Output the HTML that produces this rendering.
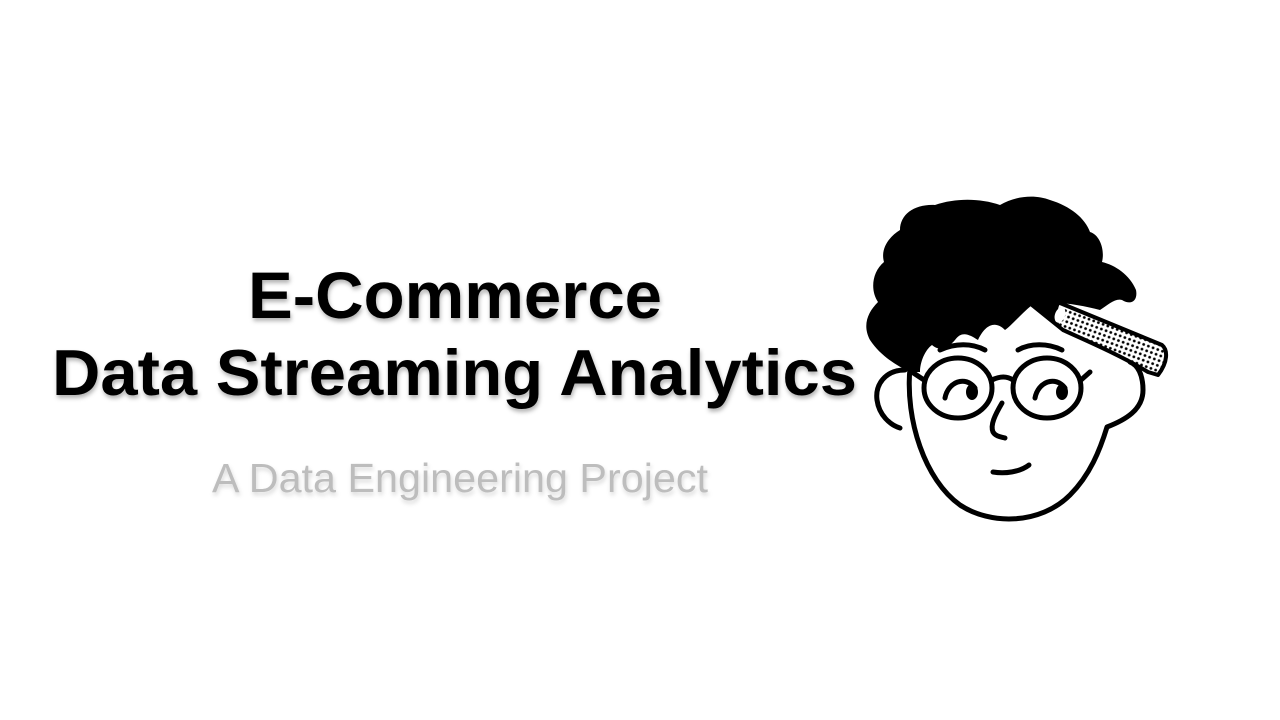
<!DOCTYPE html>
<html><head><meta charset="utf-8"><style>
html,body{margin:0;padding:0;background:#fff;width:1280px;height:720px;overflow:hidden}
svg{display:block}
</style></head><body>
<svg width="1280" height="720" viewBox="0 0 1280 720" xmlns="http://www.w3.org/2000/svg">
<defs>
<filter id="sh" x="-10%" y="-20%" width="120%" height="150%"><feDropShadow dx="1" dy="3" stdDeviation="2" flood-color="#000" flood-opacity="0.3"/></filter>
<filter id="sh2" x="-10%" y="-20%" width="120%" height="150%"><feDropShadow dx="1" dy="3" stdDeviation="2" flood-color="#000" flood-opacity="0.15"/></filter>
<pattern id="dots" width="5" height="5" patternUnits="userSpaceOnUse" patternTransform="rotate(20)"><rect width="5" height="5" fill="#fff"/><circle cx="2.5" cy="2.5" r="1.4" fill="#000"/></pattern>
</defs>
<g font-family="Liberation Sans, sans-serif" font-weight="bold" fill="#000" filter="url(#sh)">
<text x="455" y="318" font-size="66" text-anchor="middle" textLength="414" lengthAdjust="spacingAndGlyphs">E-Commerce</text>
<text x="52" y="395" font-size="65" textLength="805" lengthAdjust="spacingAndGlyphs">Data Streaming Analytics</text>
</g>
<text x="212" y="492" font-family="Liberation Sans, sans-serif" font-size="41" fill="#bdbdbd" textLength="496" lengthAdjust="spacingAndGlyphs" filter="url(#sh2)">A Data Engineering Project</text>

<g fill="none" stroke="#000" stroke-width="5" stroke-linecap="round" stroke-linejoin="round">
<path d="M910,368 C905,420 925,480 960,505 C990,525 1040,525 1070,495 C1090,475 1100,450 1107,427 C1125,420 1143,410 1143,390 C1143,375 1138,365 1130,362"/>
<path d="M905,370 C885,370 875,385 877,400 C879,415 890,425 900,428"/>
<ellipse cx="958" cy="388" rx="34" ry="30"/>
<ellipse cx="1047" cy="388" rx="34" ry="30"/>
<path d="M992,380 C1000,376 1007,376 1013,380"/>
<path d="M924,380 L912,372"/>
<path d="M1081,380 L1090,372"/>
<path d="M940,350 C955,343 972,343 985,350"/>
<path d="M1018,350 C1030,343 1048,343 1062,350"/>
<path d="M945,398 C948,382 965,375 975,388"/>
<path d="M1035,398 C1038,382 1055,375 1065,388"/>
<path d="M1002,403 C995,415 990,425 993,432 C996,437 1002,437 1005,438"/>
<path d="M993,472 C1005,474 1020,472 1029,465"/>
</g>
<ellipse cx="972" cy="392" rx="6" ry="8" fill="#000"/>
<ellipse cx="1062" cy="392" rx="6" ry="8" fill="#000"/>
<path fill="#000" d="M910,372 C895,365 880,355 870,340 C862,325 868,312 878,302 C870,290 872,272 884,262 C880,248 890,236 900,230 C900,214 915,204 935,205 C955,198 980,198 1000,205 C1015,196 1035,194 1050,200 C1070,206 1085,218 1090,232 C1100,235 1105,250 1102,262 C1115,265 1130,275 1136,290 C1138,300 1132,306 1122,300 C1115,298 1108,305 1100,310 C1080,305 1055,300 1032,305 C1020,315 1012,325 1005,330 C995,320 985,325 978,340 C970,335 962,330 955,340 C948,348 940,352 932,345 C925,350 920,362 920,372 Z"/>
<path d="M1032,305 L1060,303 L1162,345 C1168,350 1168,362 1158,375 L1148,372 C1120,355 1085,340 1063,330 Z" fill="url(#dots)" stroke="#000" stroke-width="4" stroke-linejoin="round"/>
<path d="M1032,305 L1060,303 C1055,315 1058,325 1063,330 Z" fill="#000"/>
<ellipse cx="1060" cy="315" rx="5" ry="8" fill="#fff" transform="rotate(20 1060 315)"/>
</svg>
</body></html>
